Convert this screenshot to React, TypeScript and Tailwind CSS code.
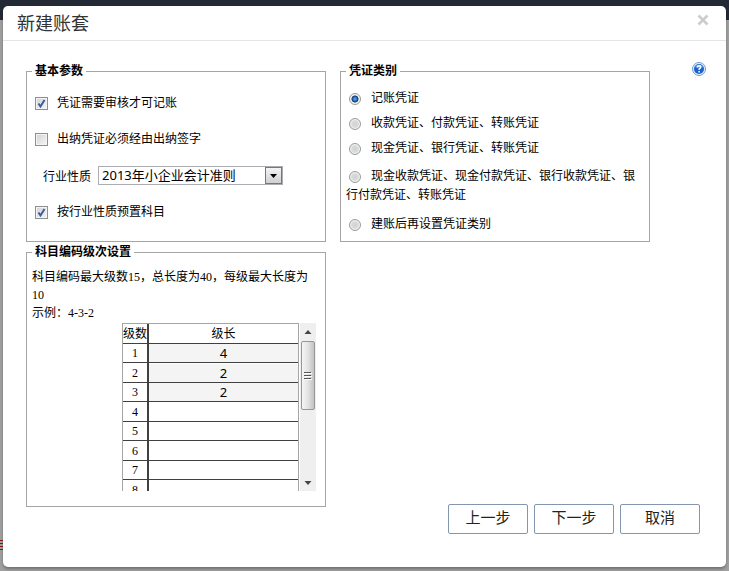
import type { ReactNode } from "react";

const voucherTypes = [
  { id: "single", label: "记账凭证" },
  { id: "receipt-payment", label: "收款凭证、付款凭证、转账凭证" },
  { id: "cash-bank", label: "现金凭证、银行凭证、转账凭证" },
  {
    id: "detailed",
    label: "现金收款凭证、现金付款凭证、银行收款凭证、银行付款凭证、转账凭证",
    multiline: true,
  },
  { id: "later", label: "建账后再设置凭证类别" },
];

const levelLengths = ["4", "2", "2"];
const levels = [1, 2, 3, 4, 5, 6, 7, 8];

function Panel({ title, className, children }: { title: string; className: string; children: ReactNode }) {
  return (
    <fieldset className={`min-w-0 border border-[#a5a5a5] ${className}`}>
      <legend className="ml-[5px] px-[3px] font-bold leading-[18px]">{title}</legend>
      {children}
    </fieldset>
  );
}

function Check({ label, checked }: { label: string; checked?: boolean }) {
  return (
    <label className="ml-[3px] flex h-[18px] items-center gap-[9px]">
      <span className="grid size-[13px] shrink-0">
        <input
          type="checkbox"
          defaultChecked={checked}
          className="peer col-start-1 row-start-1 size-[13px] appearance-none border border-[#8e8f8f] bg-linear-to-br from-[#cfd3d8] to-[#f6f6f6] shadow-[inset_0_0_0_1px_#f4f4f4]"
        />
        <svg
          viewBox="0 0 13 13"
          className="pointer-events-none invisible col-start-1 row-start-1 size-[13px] peer-checked:visible"
        >
          <path d="M3.5 6.5 L5.5 9.5 L9.5 3" fill="none" stroke="#3f5c9a" strokeWidth="2" />
        </svg>
      </span>
      {label}
    </label>
  );
}

function HelpIcon() {
  return (
    <svg viewBox="0 0 14 14" className="size-3.5">
      <circle cx="7" cy="7" r="6.5" fill="#e8f1fb" stroke="#6f9bd8" />
      <circle cx="7" cy="7" r="5" fill="#1c62c9" />
      <path d="M3 5 A4.4 4.4 0 0 1 11 5 Q7 7 3 5Z" fill="#5b9bea" />
      <path d="M5.2 5.4 Q5.3 3.7 7.1 3.7 Q8.9 3.8 8.8 5.2 Q8.7 6.1 7.1 7 V8" fill="none" stroke="#fff" strokeWidth="1.4" />
      <rect x="6.3" y="9" width="1.6" height="1.5" fill="#fff" />
    </svg>
  );
}

function ScrollBar() {
  return (
    <div className="ml-px flex w-4 flex-col bg-[#efefef]" aria-hidden="true">
      <svg viewBox="0 0 16 18" className="h-[18px] w-4">
        <path d="M4.5 11 L8 7 L11.5 11Z" fill="#444" />
      </svg>
      <div className="mx-px flex h-[69px] items-center justify-center rounded-[2px] border border-[#979797] bg-linear-to-r from-[#f5f5f5] via-[#e3e3e4] to-[#bfc1c4]">
        <svg viewBox="0 0 8 8" className="size-2">
          <path d="M0 .5H7M0 3.5H7M0 6.5H7" stroke="#555" />
          <path d="M1 1.5H8M1 4.5H8M1 7.5H8" stroke="#fff" />
        </svg>
      </div>
      <svg viewBox="0 0 16 18" className="mt-auto h-[18px] w-4">
        <path d="M4.5 8 L8 12 L11.5 8Z" fill="#444" />
      </svg>
    </div>
  );
}

function LevelTable() {
  return (
    <div className="mr-[9px] ml-auto flex h-[168px] w-[194px]">
      <div className="flex-1 overflow-hidden">
        <table className="w-full table-fixed border-separate border-spacing-0 border-x border-t border-[#a5a5a5] text-center">
          <thead>
            <tr className="h-5">
              <th className="w-[26px] border-r-2 border-b border-[#404040] p-0 font-normal leading-[18px] whitespace-nowrap">级数</th>
              <th className="border-b border-[#404040] p-0 font-normal leading-[18px]">级长</th>
            </tr>
          </thead>
          <tbody>
            {levels.map((level) => (
              <tr key={level} className="odd:h-[19px] even:h-5">
                <td className="border-r-2 border-b border-[#404040] p-0 font-['Liberation_Serif',serif] leading-[18px]">{level}</td>
                <td className="border-b border-[#404040] p-0">
                  {levelLengths[level - 1] && (
                    <input
                      type="text"
                      aria-label={`第${level}级级长`}
                      defaultValue={levelLengths[level - 1]}
                      className="block h-[18px] w-full bg-[#f4f4f4] text-center font-['Noto_Sans',sans-serif] text-[13px] leading-[18px]"
                    />
                  )}
                </td>
              </tr>
            ))}
          </tbody>
        </table>
      </div>
      <ScrollBar />
    </div>
  );
}

function DialogButton({ children }: { children: ReactNode }) {
  return (
    <button type="button" className="h-[30px] w-20 rounded-[2px] border border-[#8496ad] bg-white pb-0.5 text-[15px] leading-5 text-[#222]">
      {children}
    </button>
  );
}

export default function App() {
  return (
    <div className="relative flex min-h-screen flex-col bg-[#a0a0a0] font-['Liberation_Sans','Noto_Sans_CJK_SC',sans-serif] text-xs leading-[18px] text-black">
      <div className="h-5 bg-[#232a36]" />
      {/* edge of the page that stays visible behind the dialog */}
      <div className="absolute top-[540px] left-0 flex w-[3px] flex-col gap-0.5">
        <div className="h-px bg-[#8b1a10]" />
        <div className="h-px bg-[#8b1a10]" />
        <div className="h-px bg-[#8b1a10]" />
        <div className="h-px bg-[#8b1a10]" />
      </div>

      <div
        role="dialog"
        aria-labelledby="dialog-title"
        className="relative mx-[3px] -mt-3.5 mb-1 flex-1 rounded-[5px] bg-white shadow-[0_2px_3px_rgba(0,0,0,0.3)]"
      >
        <header className="flex h-[35px] items-center justify-between border-b border-[#e5e5e5] pr-[17px] pl-3.5">
          <h1 id="dialog-title" className="pt-0.5 text-lg leading-6 text-[#333]">新建账套</h1>
          <button type="button" aria-label="关闭" className="mb-1.5">
            <svg viewBox="0 0 12 12" className="size-3">
              <path d="M1.5 1.5 L10.5 10.5 M10.5 1.5 L1.5 10.5" stroke="#ccc" strokeWidth="2.6" />
            </svg>
          </button>
        </header>

        <form className="grid grid-cols-[300fr_366fr] gap-x-3.5 pt-[21px] pr-5 pb-[33px] pl-[23px]">
          <div className="flex min-w-0 flex-col gap-px">
            <Panel title="基本参数" className="pb-5">
              <div className="flex flex-col gap-[18px] px-[5px] pt-3.5">
                <Check label="凭证需要审核才可记账" checked />
                <Check label="出纳凭证必须经由出纳签字" />
                <div className="ml-[11px] flex h-[19px] items-center gap-[7px]">
                  <label htmlFor="industry" className="shrink-0 pt-0.5">行业性质</label>
                  <div className="grid w-[185px]">
                    <select
                      id="industry"
                      className="col-start-1 row-start-1 h-[19px] w-full appearance-none border border-[#abadb3] bg-white pl-[3px] font-['Noto_Sans','Noto_Sans_CJK_SC',sans-serif] text-[13px] leading-[17px]"
                    >
                      <option>2013年小企业会计准则</option>
                    </select>
                    <span className="pointer-events-none col-start-1 row-start-1 m-px flex w-[17px] items-center justify-center justify-self-end border border-[#777] bg-linear-to-b from-[#f4f4f4] to-[#d0d0d3]">
                      <svg viewBox="0 0 7 4" className="h-1 w-[7px]">
                        <path d="M0 0 H7 L3.5 4Z" fill="#000" />
                      </svg>
                    </span>
                  </div>
                </div>
                <Check label="按行业性质预置科目" checked />
              </div>
            </Panel>

            <Panel title="科目编码级次设置" className="pb-[15px]">
              <div className="px-[5px] pt-[7px] pb-px font-['Liberation_Serif','Noto_Sans_CJK_SC',serif]">
                <p className="pr-2">科目编码最大级数15，总长度为40，每级最大长度为10</p>
                <p>示例：4-3-2</p>
              </div>
              <LevelTable />
            </Panel>
          </div>

          <div className="flex min-w-0 flex-col">
            <div className="flex items-start gap-[42px]">
              <Panel title="凭证类别" className="flex-1 pb-2">
                <div className="flex flex-col gap-[7px] px-[5px] pt-[9px]">
                  {voucherTypes.map((type, i) => (
                    <label key={type.id} className={type.multiline ? "my-[3px] leading-[19px]" : ""}>
                      <input
                        type="radio"
                        name="voucher"
                        value={type.id}
                        defaultChecked={i === 0}
                        className="mr-2.5 ml-[3px] size-3 appearance-none rounded-full border border-[#9a9b9b] bg-radial from-[#cfd1d3] to-[#e8e9ea] align-middle shadow-[inset_0_0_0_1px_#f4f4f4] checked:from-[#4f9be0] checked:from-10% checked:via-[#123a78] checked:via-45% checked:to-[#f0f0f0] checked:to-55%"
                      />
                      {type.label}
                    </label>
                  ))}
                </div>
              </Panel>
              <button type="button" aria-label="帮助">
                <HelpIcon />
              </button>
            </div>
            <div className="mt-[262px] flex justify-end gap-1.5 pr-1.5">
              <DialogButton>上一步</DialogButton>
              <DialogButton>下一步</DialogButton>
              <DialogButton>取消</DialogButton>
            </div>
          </div>
        </form>
      </div>
    </div>
  );
}
